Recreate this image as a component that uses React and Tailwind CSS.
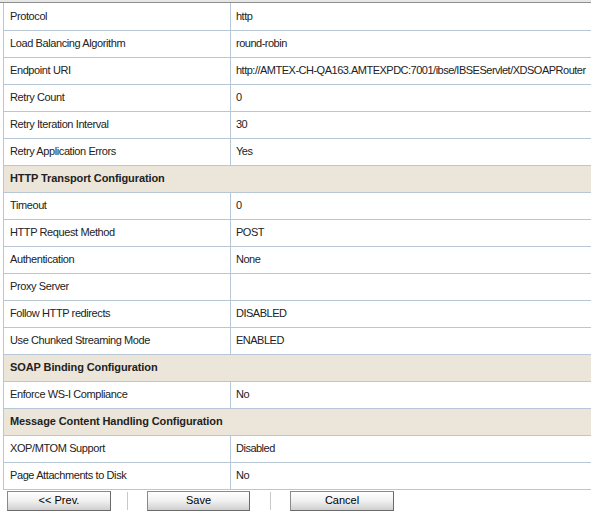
import React from 'react';

const rows = [
    { label: 'Protocol', value: 'http' },
    { label: 'Load Balancing Algorithm', value: 'round-robin' },
    { label: 'Endpoint URI', value: 'http://AMTEX-CH-QA163.AMTEXPDC:7001/ibse/IBSEServlet/XDSOAPRouter' },
    { label: 'Retry Count', value: '0' },
    { label: 'Retry Iteration Interval', value: '30' },
    { label: 'Retry Application Errors', value: 'Yes' },
    { section: 'HTTP Transport Configuration' },
    { label: 'Timeout', value: '0' },
    { label: 'HTTP Request Method', value: 'POST' },
    { label: 'Authentication', value: 'None' },
    { label: 'Proxy Server', value: '' },
    { label: 'Follow HTTP redirects', value: 'DISABLED' },
    { label: 'Use Chunked Streaming Mode', value: 'ENABLED' },
    { section: 'SOAP Binding Configuration' },
    { label: 'Enforce WS-I Compliance', value: 'No' },
    { section: 'Message Content Handling Configuration' },
    { label: 'XOP/MTOM Support', value: 'Disabled' },
    { label: 'Page Attachments to Disk', value: 'No' },
];

const Button = ({ children, className = 'w-[104px]' }) => (
    <button className={`${className} h-[20px] border border-[#8a8a8a] border-b-[#6a6a6a] border-r-[#6a6a6a] bg-gradient-to-b from-white via-[#f0f0f0] to-[#cfcfcf] text-[11px] leading-none text-black`}>
        {children}
    </button>
);

const App = () => {
    return (
        <div className="w-[591px] h-[514px] overflow-hidden bg-white font-['Liberation_Sans',Arial,sans-serif] text-[11px] text-[#222]">
            <div className="h-[3px] bg-[#e6e6e6] border-b border-[#8e8e8e]"></div>
            <div className="pl-[3px]">
                <table className="w-[600px] border-collapse table-fixed">
                    <colgroup>
                        <col className="w-[227px]" />
                        <col />
                    </colgroup>
                    <tbody>
                        {rows.map((row, i) =>
                            row.section ? (
                                <tr key={i} className="h-[27px]">
                                    <td colSpan={2} className="border-l border-b border-[#b8c7d6] bg-[#ebe6d9] pl-[6px] font-bold tracking-[-0.1px] align-middle">
                                        {row.section}
                                    </td>
                                </tr>
                            ) : (
                                <tr key={i} className="h-[27px]">
                                    <td className="border-l border-b border-r border-[#b8c7d6] pl-[6px] tracking-[-0.4px] align-middle whitespace-nowrap">
                                        {row.label}
                                    </td>
                                    <td className="border-b border-[#b8c7d6] pl-[5px] tracking-[-0.5px] align-middle whitespace-nowrap">
                                        {row.value}
                                    </td>
                                </tr>
                            )
                        )}
                    </tbody>
                </table>
            </div>
            <div className="flex items-center pl-[7px] pt-[1px]">
                <Button>&lt;&lt; Prev.</Button>
                <div className="w-px h-[18px] bg-[#c8c8c8] ml-[16px] mr-[19px]"></div>
                <Button className="w-[103px]">Save</Button>
                <div className="w-px h-[18px] bg-[#c8c8c8] ml-[20px] mr-[19px]"></div>
                <Button>Cancel</Button>
            </div>
        </div>
    );
};

export default App;
